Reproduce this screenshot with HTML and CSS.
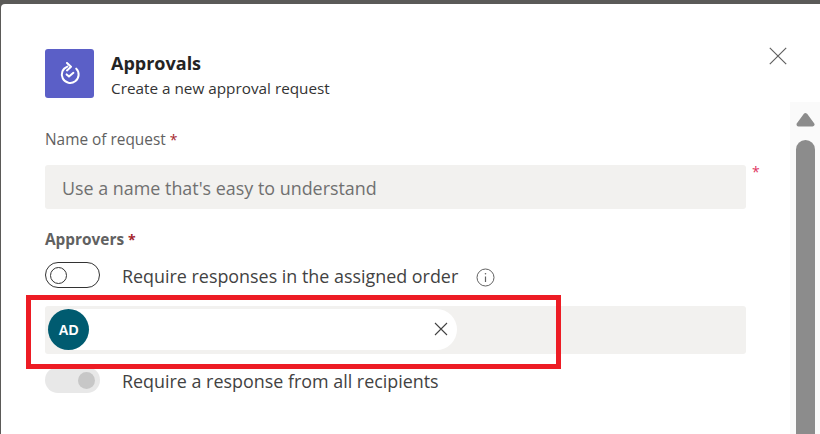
FILE: index.html
```html
<!DOCTYPE html>
<html lang="en">
<head>
<meta charset="utf-8">
<title>Approvals</title>
<link rel="stylesheet" href="styles.css">
</head>
<body>
<div class="dialog">
  <header class="head">
    <div class="app-icon">
      <svg width="24" height="24" viewBox="0 0 24 24" fill="none" stroke="#fff" stroke-width="2" stroke-linecap="round" stroke-linejoin="round"><path d="M9.4 4.6 A8.4 8.4 0 1 0 18.2 6.6"/><path d="M9 1 L13 4.8 L9 8.4"/><path d="M8.6 12.4 L11 14.6 L15.4 10.8"/></svg>
    </div>
    <div class="head-text">
      <div class="title">Approvals</div>
      <div class="subtitle">Create a new approval request</div>
    </div>
    <button class="close" aria-label="Close">
      <svg width="18" height="18" viewBox="0 0 18 18" stroke="#616161" stroke-width="1.2" fill="none"><path d="M0.8 0.8 L17.2 17.2 M17.2 0.8 L0.8 17.2"/></svg>
    </button>
  </header>
  <div class="body">
    <main class="form">
      <div class="label">Name of request <span class="req">*</span></div>
      <div class="input-row">
        <div class="input">Use a name that's easy to understand</div>
        <span class="req-side">*</span>
      </div>
      <div class="label-strong">Approvers <span class="req">*</span></div>
      <div class="toggle-row first">
        <span class="toggle off"><span class="knob"></span></span>
        <span class="toggle-text">Require responses in the assigned order</span>
        <svg class="info" width="19" height="19" viewBox="0 0 19 19" fill="none" stroke="#616161"><circle cx="9.5" cy="9.5" r="8.5" stroke-width="1"/><path d="M9.5 8.5 V14" stroke-width="1.2"/><circle cx="9.5" cy="5.8" r="0.8" fill="#616161" stroke="none"/></svg>
      </div>
      <div class="people">
        <div class="chip">
          <span class="avatar">AD</span>
          <svg class="chip-x" width="14" height="14" viewBox="0 0 14 14" stroke="#424242" stroke-width="1.1" fill="none"><path d="M1 1 L13 13 M13 1 L1 13"/></svg>
        </div>
      </div>
      <div class="toggle-row second">
        <span class="toggle on"><span class="knob"></span></span>
        <span class="toggle-text">Require a response from all recipients</span>
      </div>
    </main>
    <aside class="scroll">
      <svg class="arrow" width="19" height="16" viewBox="0 0 19 16"><path d="M9.5 3 L16.5 12.5 L2.5 12.5 Z" fill="#8c8c8c" stroke="#8c8c8c" stroke-width="4" stroke-linejoin="round"/></svg>
      <div class="thumb"></div>
    </aside>
  </div>
  <div class="highlight"></div>
</div>
</body>
</html>
```
FILE: styles.css
```css
* { box-sizing: border-box; }
html, body { margin: 0; height: 100%; overflow: hidden; }
body {
  background: #5b5a58;
  padding: 4px 0 0 1px;
  font-family: "Open Sans", "Noto Sans", sans-serif;
  color: #242424;
}
.dialog {
  position: relative;
  width: 819px;
  height: 430px;
  background: #fff;
  border-radius: 4px 0 0 0;
  overflow: hidden;
}
.head {
  display: flex;
  height: 49px;
  margin: 45px 33px 0 44px;
}
.app-icon {
  width: 49px;
  height: 49px;
  background: #5b5fc7;
  border-radius: 3px;
  display: flex;
  align-items: center;
  justify-content: center;
}
.head-text { margin-left: 17px; flex: 0 0 auto; }
.title {
  font-size: 18px;
  font-weight: 700;
  line-height: 28px;
}
.subtitle { font-size: 15.3px; line-height: 22px; color: #333; }
.close {
  margin: -2px 0 0 auto;
  padding: 0;
  border: 0;
  background: none;
  width: 18px;
  height: 18px;
}
.body { display: flex; margin-top: 4px; }
.form { width: 745px; margin-left: 44px; flex: 0 0 auto; }
.label {
  font-size: 15.4px;
  line-height: 20px;
  color: #616161;
  margin-top: 28px;
}
.req { color: #a4262c; font-size: 14px; }
.input-row { display: flex; margin-top: 15px; }
.input {
  width: 701px;
  height: 44px;
  background: #f2f1ef;
  border-radius: 3px;
  padding-left: 17px;
  font-size: 17.9px;
  line-height: 47px;
  color: #707070;
}
.req-side { color: #e0355f; font-size: 14px; line-height: 14px; margin: 0 0 0 6px; }
.label-strong {
  font-size: 15.4px;
  font-weight: 700;
  line-height: 20px;
  color: #616161;
  margin-top: 21px;
}
.toggle-row { display: flex; align-items: center; height: 26px; }
.toggle-row.first { margin-top: 12px; }
.toggle-row.second { margin-top: 13px; }
.toggle {
  width: 55px;
  height: 26px;
  border-radius: 13px;
  display: flex;
  align-items: center;
  padding: 0 4px;
  flex: 0 0 auto;
}
.toggle.off { border: 1px solid #333; }
.toggle.off .knob { width: 17px; height: 17px; border: 1px solid #333; border-radius: 50%; }
.toggle.on { background: #e8e8e8; justify-content: flex-end; padding-right: 5px; }
.toggle.on .knob { width: 17px; height: 17px; background: #c7c7c7; border-radius: 50%; }
.toggle-text { margin-left: 22px; font-size: 17.9px; color: #424242; line-height: 26px; margin-top: 2px; }
.info { margin-left: 18px; margin-top: 5px; }
.people {
  width: 701px;
  height: 48px;
  margin-top: 18px;
  background: #f2f1ef;
  border-radius: 3px;
  padding: 3px;
}
.chip {
  width: 409px;
  height: 41px;
  background: #fff;
  border-radius: 21px;
  display: flex;
  align-items: center;
  justify-content: space-between;
  padding-right: 9px;
}
.avatar {
  width: 41px;
  height: 41px;
  border-radius: 50%;
  background: #005b70;
  color: #fff;
  display: flex;
  align-items: center;
  justify-content: center;
  font-family: "Liberation Sans", sans-serif;
  font-size: 14px;
  font-weight: 700;
}
.chip-x { margin-top: -2px; }
.scroll {
  width: 30px;
  height: 340px;
  background: #fafafa;
  padding: 10px 5px 0 6px;
  flex: 0 0 auto;
}
.arrow { display: block; margin-bottom: 12px; }
.thumb { width: 19px; height: 300px; background: #8c8c8c; border-radius: 9.5px 9.5px 0 0; }
.highlight {
  position: absolute;
  left: 25px;
  top: 291px;
  width: 535px;
  height: 74px;
  border: 5px solid #ed1c24;
}
```
